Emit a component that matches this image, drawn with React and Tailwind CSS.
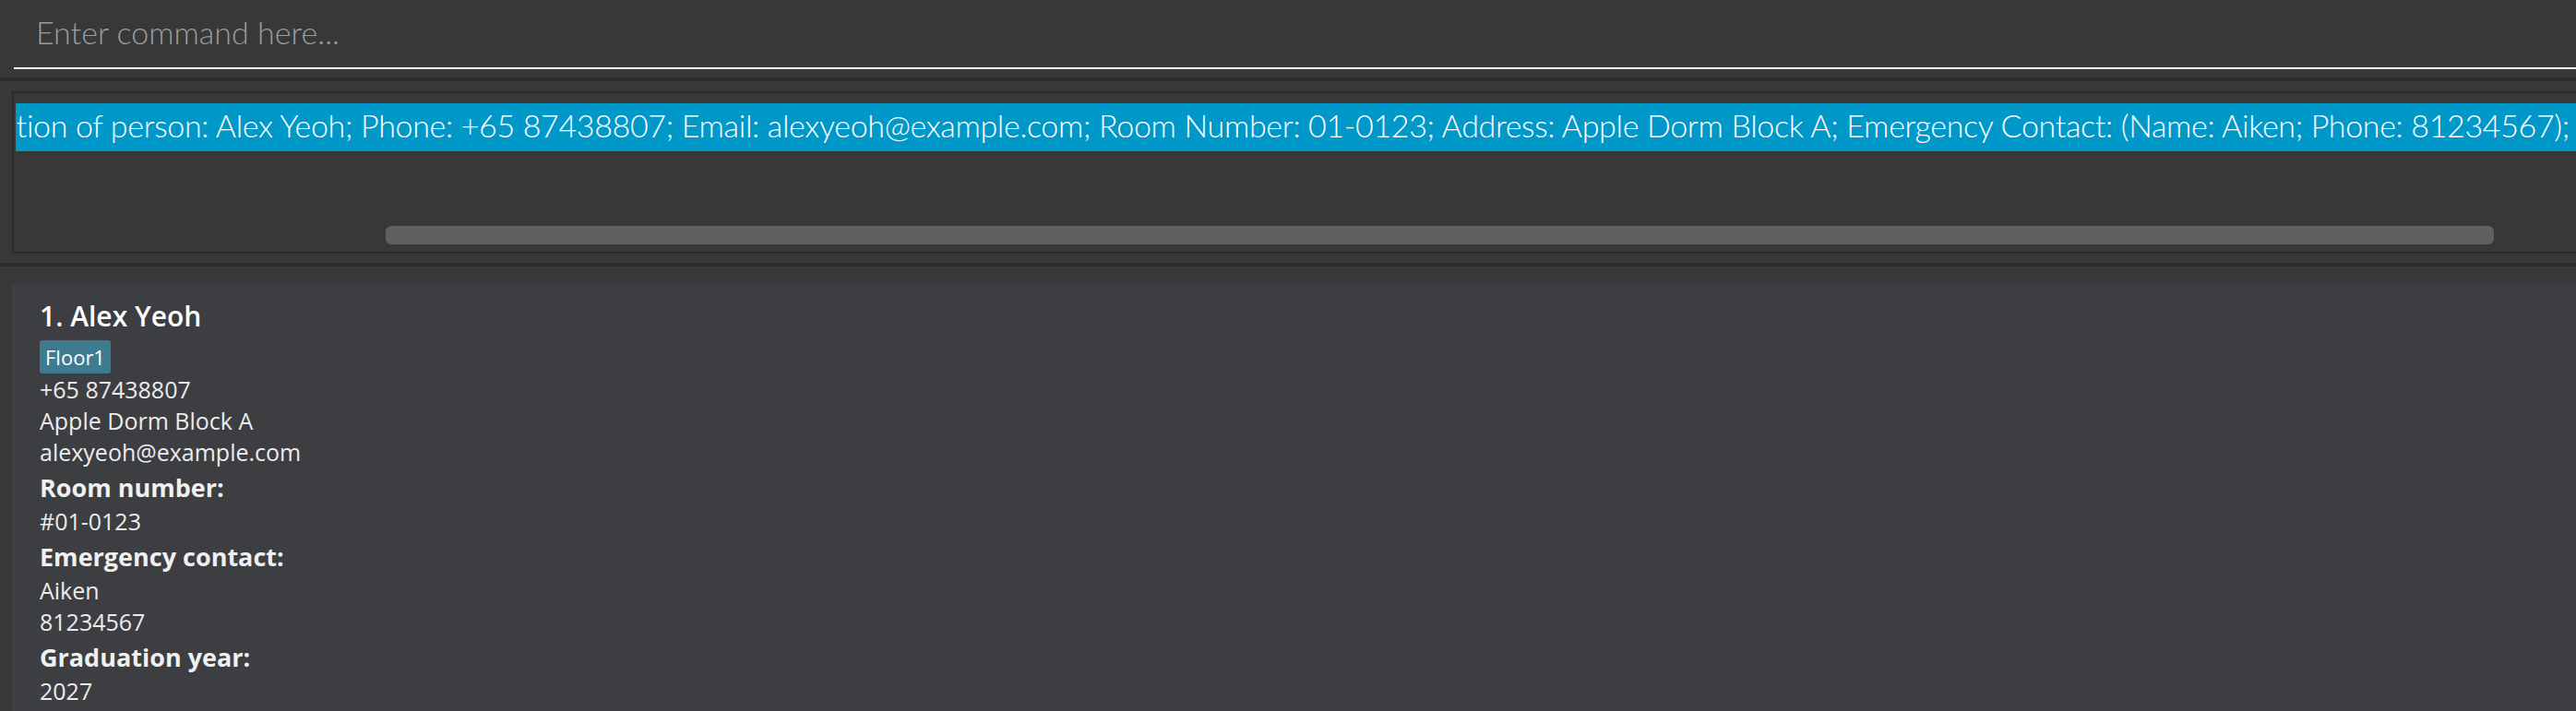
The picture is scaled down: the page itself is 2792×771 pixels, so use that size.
const resultText =
  "Description of person: Alex Yeoh; Phone: +65 87438807; Email: alexyeoh@example.com; Room Number: 01-0123; Address: Apple Dorm Block A; Emergency Contact: (Name: Aiken; Phone: 81234567);";

function CommandBox() {
  return (
    <div className="h-[84px] pl-[15px]">
      <div className="h-[75px] border-b-2 border-white pl-[24px] pt-[18px]">
        <span className="font-['Lato',sans-serif] font-light text-[34px] leading-[34px] text-[#9c9c9c]">
          Enter command here...
        </span>
      </div>
    </div>
  );
}

function ResultDisplay() {
  return (
    <div className="h-[197px] pl-[13px] pt-[11px]">
      {/* box runs past the right edge, like the scrolled text area */}
      <div className="-mr-[20px] h-[176px] border-2 border-[#2b2b2b]">
        {/* text is scrolled: its end sits near the right edge, its start is clipped */}
        <div className="mt-[11px] ml-[2px] h-[52px] bg-[#0098c9] overflow-hidden whitespace-nowrap flex justify-end pr-[25px]">
          <div className="shrink-0 font-['Lato',sans-serif] font-light text-[34px] leading-[48px] tracking-[-0.34px] text-white">
            {resultText}
          </div>
        </div>
        {/* horizontal scrollbar thumb */}
        <div className="mt-[81px] ml-[403px] mr-[107px] h-[20px] rounded-[6px] bg-[#606060]" />
      </div>
    </div>
  );
}

function Line({ children }) {
  return <div className="h-[34px] text-[25px] leading-[34px] text-[#ececec]">{children}</div>;
}

function Label({ children }) {
  return (
    <div className="mt-[3px] h-[38px] text-[27px] leading-[38px] font-bold text-[#f0f0f0]">
      {children}
    </div>
  );
}

function PersonCard() {
  return (
    <div className="ml-[13px] h-[470px] bg-[#3c3e41] pl-[30px] pt-[14px] font-['Open_Sans',sans-serif]">
      <div className="h-[40px] text-[30px] leading-[40px] font-semibold text-white">1. Alex Yeoh</div>
      <div className="mt-[6px] flex">
        <span className="h-[36px] rounded-[3px] bg-[#3e7b91] px-[6px] text-[22px] leading-[36px] text-white">
          Floor1
        </span>
      </div>
      <Line>+65 87438807</Line>
      <Line>Apple Dorm Block A</Line>
      <Line>alexyeoh@example.com</Line>
      <Label>Room number:</Label>
      <Line>#01-0123</Line>
      <Label>Emergency contact:</Label>
      <Line>Aiken</Line>
      <Line>81234567</Line>
      <Label>Graduation year:</Label>
      <Line>2027</Line>
    </div>
  );
}

export default function App() {
  return (
    <div className="w-full h-[771px] overflow-hidden bg-[#383838]">
      <CommandBox />
      <div className="h-[4px] bg-[#2b2b2b]" />
      <ResultDisplay />
      <div className="h-[4px] bg-[#2b2b2b]" />
      <div className="h-[20px]" />
      <PersonCard />
    </div>
  );
}
